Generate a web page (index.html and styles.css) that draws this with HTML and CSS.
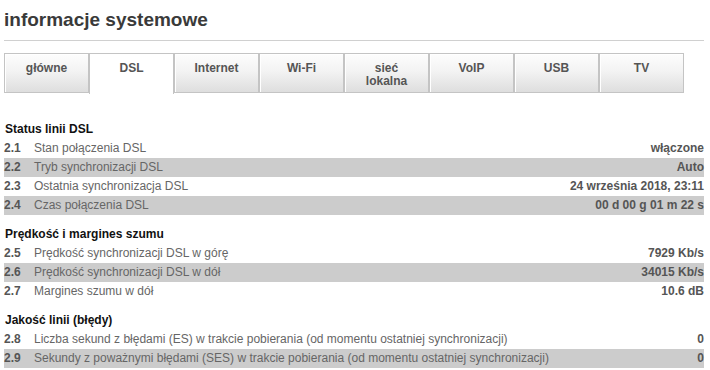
FILE: index.html
```html
<!DOCTYPE html>
<html lang="pl">
<head>
    <meta charset="UTF-8">
    <meta name="viewport" content="width=device-width, initial-scale=1.0">
    <title>informacje systemowe</title>
    <link rel="stylesheet" href="styles.css">
</head>
<body>
    <div class="page">
        <h1 class="title">informacje systemowe</h1>

        <div class="tabs">
            <a href="#" class="tab">główne</a>
            <a href="#" class="tab active">DSL</a>
            <a href="#" class="tab">Internet</a>
            <a href="#" class="tab">Wi-Fi</a>
            <a href="#" class="tab">sieć<br>lokalna</a>
            <a href="#" class="tab">VoIP</a>
            <a href="#" class="tab">USB</a>
            <a href="#" class="tab">TV</a>
        </div>

        <div class="section first">
            <h2>Status linii DSL</h2>
            <div class="row"><span class="num">2.1</span><span class="label">Stan połączenia DSL</span><span class="value">włączone</span></div>
            <div class="row alt"><span class="num">2.2</span><span class="label">Tryb synchronizacji DSL</span><span class="value">Auto</span></div>
            <div class="row"><span class="num">2.3</span><span class="label">Ostatnia synchronizacja DSL</span><span class="value">24 września 2018, 23:11</span></div>
            <div class="row alt"><span class="num">2.4</span><span class="label">Czas połączenia DSL</span><span class="value">00 d 00 g 01 m 22 s</span></div>
        </div>

        <div class="section">
            <h2>Prędkość i margines szumu</h2>
            <div class="row"><span class="num">2.5</span><span class="label">Prędkość synchronizacji DSL w górę</span><span class="value">7929 Kb/s</span></div>
            <div class="row alt"><span class="num">2.6</span><span class="label">Prędkość synchronizacji DSL w dół</span><span class="value">34015 Kb/s</span></div>
            <div class="row"><span class="num">2.7</span><span class="label">Margines szumu w dół</span><span class="value">10.6 dB</span></div>
        </div>

        <div class="section">
            <h2>Jakość linii (błędy)</h2>
            <div class="row"><span class="num">2.8</span><span class="label">Liczba sekund z błędami (ES) w trakcie pobierania (od momentu ostatniej synchronizacji)</span><span class="value">0</span></div>
            <div class="row alt"><span class="num">2.9</span><span class="label">Sekundy z poważnymi błędami (SES) w trakcie pobierania (od momentu ostatniej synchronizacji)</span><span class="value">0</span></div>
        </div>
    </div>
</body>
</html>
```

FILE: styles.css
```css
* {
    margin: 0;
    padding: 0;
    box-sizing: border-box;
}

body {
    font-family: "Liberation Sans", Arial, sans-serif;
    font-size: 12px;
    color: #666;
    background: #fff;
}

.page {
    padding: 0 6px 0 4px;
}

.title {
    font-size: 19px;
    line-height: 22px;
    font-weight: bold;
    color: #3a3a3a;
    padding: 9px 0;
    border-bottom: 1px solid #d0d0d0;
}

.tabs {
    display: flex;
    margin-top: 12px;
}

.tab {
    width: 85px;
    height: 40px;
    padding-top: 8px;
    text-align: center;
    font-weight: bold;
    line-height: 13px;
    color: #555;
    text-decoration: none;
    border: 1px solid #c4c4c4;
    box-shadow: inset 1px 1px 0 #fff;
    background: linear-gradient(to bottom, #fdfdfd 0%, #f3f3f3 45%, #dedede 100%);
}

.tab.active {
    height: 41px;
    background: #fff;
    border-bottom: none;
}

.section {
    margin-top: 9px;
}

.section.first {
    margin-top: 26px;
}

.section h2 {
    font-size: 12px;
    line-height: 20px;
    font-weight: bold;
    color: #111;
    padding-left: 1px;
}

.section.first h2 {
    line-height: 19px;
}

.row {
    display: flex;
    line-height: 19px;
    height: 19px;
}

.row.alt {
    background: #cccccc;
}

.num {
    width: 30px;
    font-weight: bold;
    color: #555;
}

.label {
    flex: 1;
    color: #666;
}

.value {
    font-weight: bold;
    color: #555;
    text-align: right;
}
```
